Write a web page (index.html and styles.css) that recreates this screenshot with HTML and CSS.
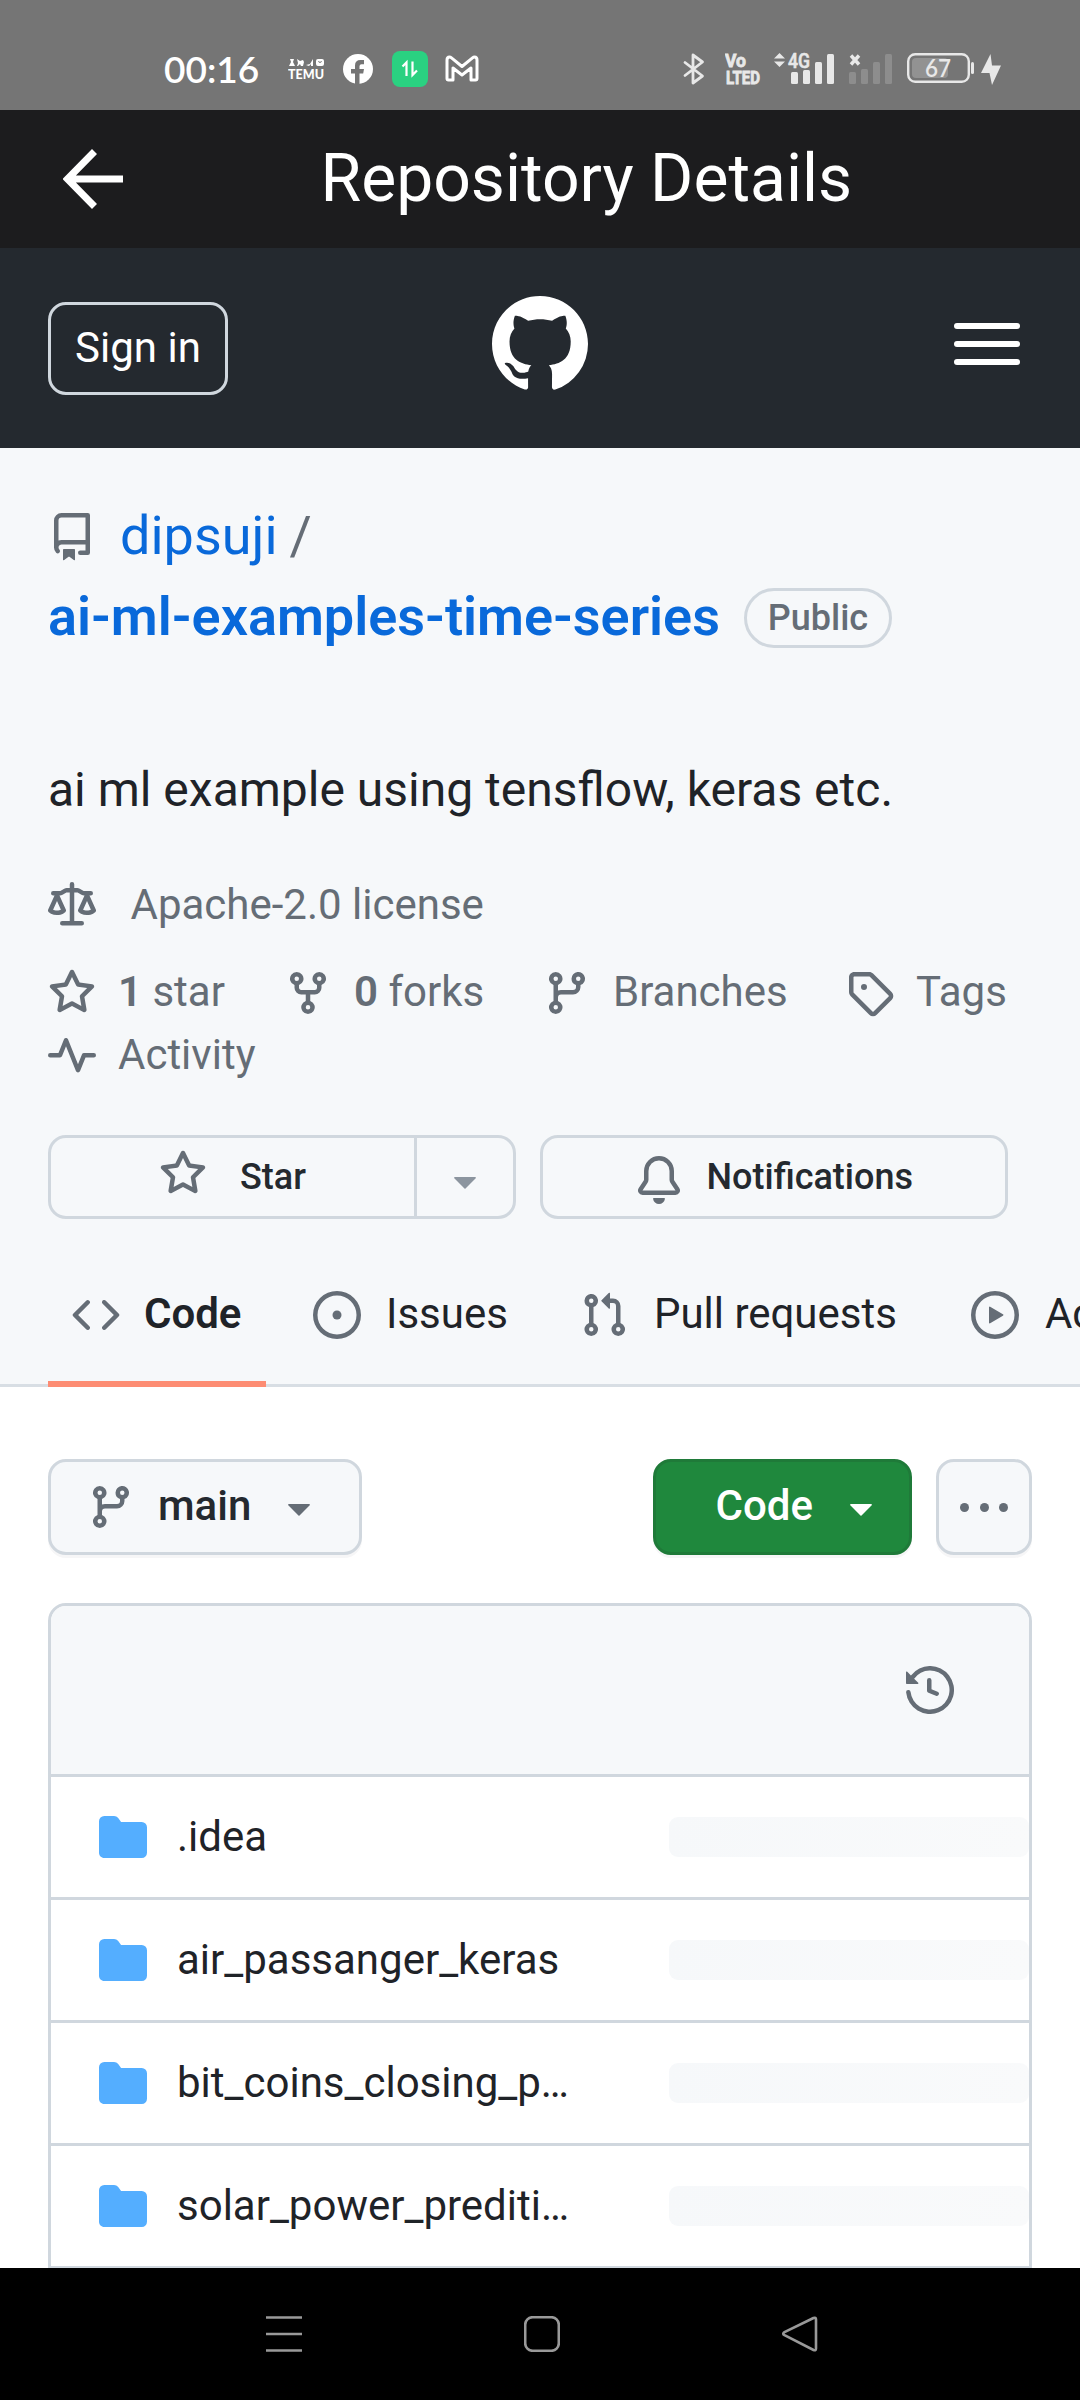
FILE: index.html
```html
<!DOCTYPE html>
<html lang="en">
<head>
<meta charset="utf-8">
<title>Repository Details</title>
<link rel="stylesheet" href="styles.css">
</head>
<body>
<svg class="sprite" aria-hidden="true">
  <symbol id="star" viewBox="0 0 16 16"><path d="M8 .25a.75.75 0 0 1 .673.418l1.882 3.815 4.21.612a.75.75 0 0 1 .416 1.279l-3.046 2.97.719 4.192a.751.751 0 0 1-1.088.791L8 12.347l-3.766 1.98a.75.75 0 0 1-1.088-.79l.72-4.194L.818 6.374a.75.75 0 0 1 .416-1.28l4.21-.611L7.327.668A.75.75 0 0 1 8 .25Zm0 2.445L6.615 5.5a.75.75 0 0 1-.564.41l-3.097.45 2.24 2.184a.75.75 0 0 1 .216.664l-.528 3.084 2.769-1.456a.75.75 0 0 1 .698 0l2.77 1.456-.53-3.084a.75.75 0 0 1 .216-.664l2.24-2.183-3.096-.45a.75.75 0 0 1-.564-.41L8 2.694Z"/></symbol>
  <symbol id="branch" viewBox="0 0 16 16"><path d="M9.5 3.25a2.25 2.25 0 1 1 3 2.122V6A2.5 2.5 0 0 1 10 8.5H6a1 1 0 0 0-1 1v1.128a2.251 2.251 0 1 1-1.5 0V5.372a2.25 2.25 0 1 1 1.5 0v1.836A2.493 2.493 0 0 1 6 7h4a1 1 0 0 0 1-1v-.628A2.25 2.25 0 0 1 9.5 3.25Zm-6 0a.75.75 0 1 0 1.5 0 .75.75 0 0 0-1.5 0Zm8.25-.75a.75.75 0 1 0 0 1.5.75.75 0 0 0 0-1.5ZM4.25 12a.75.75 0 1 0 0 1.5.75.75 0 0 0 0-1.5Z"/></symbol>
  <symbol id="caret" viewBox="0 0 16 16"><path d="m4.427 7.427 3.396 3.396a.25.25 0 0 0 .354 0l3.396-3.396A.25.25 0 0 0 11.396 7H4.604a.25.25 0 0 0-.177.427Z"/></symbol>
  <symbol id="folder" viewBox="0 0 16 16"><path d="M1.75 1A1.75 1.75 0 0 0 0 2.75v10.5C0 14.216.784 15 1.75 15h12.5A1.75 1.75 0 0 0 16 13.25v-8.5A1.75 1.75 0 0 0 14.25 3H7.5a.25.25 0 0 1-.2-.1l-.9-1.2C6.07 1.26 5.55 1 5 1H1.75Z"/></symbol>
</svg>

<div class="status">
  <span class="clock">00:16</span>
  <svg class="temu" viewBox="0 0 36 22" width="36" height="22">
    <path d="M1 8 3 4 2 1h4L5 4l2 4zM9 1l3 2 3-1 1 2-1 4h-2l-1-2-2 2H9l1-3zM18 7l4-1 3-5v7h-2V6l-2 2z"/>
    <path fill-rule="evenodd" d="M30 1h4q2 0 2 2v3q0 2-2 2h-4q-2 0-2-2V3q0-2 2-2zm0 2q2 4 4 0l-1 0q-1 2-2 0z"/>
    <text x="0" y="20.5" textLength="36" lengthAdjust="spacingAndGlyphs">TEMU</text>
  </svg>
  <svg class="fb" viewBox="0 0 30 30" width="30" height="30"><circle cx="15" cy="15" r="15"/><path class="cut" d="M12 30V19.500H8V15h4v-3.500Q12 6 17.500 6H21v4.200h-2.500q-2 0-2 2V15H21l-.8 4.500h-3.700V30z"/></svg>
  <svg class="sync" viewBox="0 0 36 36" width="36" height="36"><rect width="36" height="36" rx="8"/><path d="M10.500 15.500l4-4V25M20.500 10.500V24l4.500-4.500"/></svg>
  <svg class="mail" viewBox="0 0 34 27" width="34" height="27"><path d="M2 23.500V5q0-3 2.500-3 1 0 2 .8L17 11.500 27.500 2.800q1-.8 2-.8Q32 2 32 5v18.500q0 1.500-1.500 1.500H26V13l-9 7-9-7v12H3.500Q2 25 2 23.500z"/></svg>

  <svg class="bt" viewBox="0 0 22 34" width="22" height="34"><path d="M2 10.500 19.500 24 10 31V3l9.500 7L2 23.500"/></svg>
  <svg class="volte" viewBox="0 0 36 40" width="36" height="40"><text x="0" y="18" textLength="21" lengthAdjust="spacingAndGlyphs">Vo</text><text x="1" y="34.500" textLength="34" lengthAdjust="spacingAndGlyphs">LTED</text></svg>
  <svg class="net" viewBox="0 -6 60 40" width="60" height="40">
    <path d="M0 6.500 5.500 1 11 6.500zM0 9.500h11L5.500 15z"/>
    <text x="14" y="15.500" textLength="22" lengthAdjust="spacingAndGlyphs">4G</text>
    <rect x="17" y="20" width="7" height="12" rx="1.500"/><rect x="29" y="18" width="7" height="14" rx="1.500"/><rect x="41" y="10" width="7" height="22" rx="1.500"/><rect x="53" y="2" width="7" height="30" rx="1.500"/>
  </svg>
  <svg class="net2" viewBox="0 0 44 34" width="44" height="34">
    <path d="M2 3.500l8 9M10 3.500l-8 9"/>
    <g class="dim"><rect x="0" y="20" width="7" height="12" rx="1.500"/><rect x="12" y="17" width="7" height="15" rx="1.500"/><rect x="24" y="10" width="7" height="22" rx="1.500"/><rect x="36" y="2" width="7" height="30" rx="1.500"/></g>
  </svg>
  <svg class="battery" viewBox="0 0 68 32" width="68" height="32">
    <rect class="level" x="5" y="6" width="36" height="20" rx="4"/>
    <rect class="shell" x="1.200" y="2.200" width="60.600" height="27.600" rx="7"/>
    <rect class="nub" x="64" y="10" width="3" height="12" rx="1.500"/>
    <text x="18" y="25" textLength="26" lengthAdjust="spacingAndGlyphs">67</text>
  </svg>
  <svg class="bolt" viewBox="0 0 20 32" width="20" height="32"><path d="M9.500 0 0 19h8.500L11 31 20 11.500h-9z"/></svg>
</div>

<header class="appbar">
  <svg class="back" viewBox="0 0 60 60" width="60" height="60"><path d="M60 30H5M31.500 2.500 4.500 30 31.500 57.500"/></svg>
  <h1>Repository Details</h1>
</header>

<div class="ghbar">
  <a class="signin">Sign in</a>
  <svg class="mark" viewBox="0 0 16 16"><path d="M8 0C3.580 0 0 3.580 0 8c0 3.540 2.290 6.530 5.470 7.590.4.070.55-.17.55-.38 0-.19-.01-.82-.01-1.490-2.010.37-2.530-.49-2.690-.94-.09-.23-.48-.94-.82-1.130-.28-.15-.68-.52-.01-.53.63-.01 1.080.58 1.230.82.72 1.210 1.870.87 2.330.66.07-.52.28-.87.51-1.070-1.780-.2-3.640-.89-3.640-3.950 0-.87.31-1.590.82-2.150-.08-.2-.36-1.020.08-2.120 0 0 .67-.21 2.200.82.64-.18 1.320-.27 2-.27.68 0 1.360.09 2 .27 1.530-1.040 2.200-.82 2.200-.82.44 1.100.16 1.920.08 2.120.51.56.82 1.270.82 2.150 0 3.070-1.870 3.750-3.650 3.950.29.25.54.73.54 1.480 0 1.070-.01 1.930-.01 2.200 0 .21.15.46.55.38A8.013 8.013 0 0 0 16 8c0-4.420-3.580-8-8-8Z"/></svg>
  <div class="burger"><i></i><i></i><i></i></div>
</div>

<section class="repo">
  <div class="title">
    <svg class="oct" viewBox="0 0 16 16"><path d="M2 2.500A2.500 2.500 0 0 1 4.500 0h8.750a.75.75 0 0 1 .75.75v12.500a.75.75 0 0 1-.75.75h-2.500a.75.75 0 0 1 0-1.500h1.750v-2h-8a1 1 0 0 0-.714 1.700.75.75 0 1 1-1.072 1.050A2.495 2.495 0 0 1 2 11.500Zm10.500-1h-8a1 1 0 0 0-1 1v6.708A2.486 2.486 0 0 1 4.500 9h8ZM5 12.250a.25.25 0 0 1 .25-.25h3.500a.25.25 0 0 1 .25.25v3.250a.25.25 0 0 1-.4.2l-1.450-1.087a.249.249 0 0 0-.3 0L5.400 15.700a.25.25 0 0 1-.4-.2Z"/></svg>
    <a>dipsuji</a><span class="slash">/</span>
  </div>
  <div class="title"><a class="name">ai-ml-examples-time-series</a><span class="label">Public</span></div>
  <p class="about">ai ml example using tensflow, keras etc.</p>
  <div class="license">
    <svg class="oct" viewBox="0 0 16 16"><path d="M8.750.75V2h.985c.304 0 .603.08.867.231l1.290.736c.038.022.08.033.124.033h2.234a.75.75 0 0 1 0 1.500h-.427l2.111 4.692a.75.75 0 0 1-.154.838l-.53-.53.529.531-.001.002-.002.002-.006.006-.006.005-.01.01-.045.04c-.21.176-.441.327-.686.45C14.556 10.780 13.880 11 13 11a4.498 4.498 0 0 1-2.023-.454 3.544 3.544 0 0 1-.686-.45l-.045-.04-.016-.015-.006-.006-.004-.004v-.001a.75.75 0 0 1-.154-.838L12.178 4.500h-.162c-.305 0-.604-.079-.868-.231l-1.290-.736a.245.245 0 0 0-.124-.033H8.750V13h2.500a.75.75 0 0 1 0 1.500h-6.500a.75.75 0 0 1 0-1.500h2.500V3.500h-.984a.245.245 0 0 0-.124.033l-1.289.737c-.265.15-.564.23-.869.23h-.162l2.112 4.692a.75.75 0 0 1-.154.838l-.53-.53.529.531-.001.002-.002.002-.006.006-.016.015-.045.04c-.21.176-.441.327-.686.45C4.556 10.780 3.880 11 3 11a4.498 4.498 0 0 1-2.023-.454 3.544 3.544 0 0 1-.686-.45l-.045-.04-.016-.015-.006-.006-.004-.004v-.001a.75.75 0 0 1-.154-.838L2.178 4.500H1.750a.75.75 0 0 1 0-1.500h2.234a.249.249 0 0 0 .125-.033l1.288-.737c.265-.15.564-.23.869-.23h.984V.75a.75.75 0 0 1 1.500 0Zm2.945 8.477c.285.135.718.273 1.305.273s1.020-.138 1.305-.273L13 6.327Zm-10 0c.285.135.718.273 1.305.273s1.020-.138 1.305-.273L3 6.327Z"/></svg>
    Apache-2.0 license
  </div>
  <div class="stats">
    <a><svg class="oct"><use href="#star"/></svg><span><b>1</b> star</span></a>
    <a><svg class="oct" viewBox="0 0 16 16"><path d="M5 5.372v.878c0 .414.336.75.75.75h4.500a.75.75 0 0 0 .75-.75v-.878a2.250 2.250 0 1 1 1.500 0v.878a2.250 2.250 0 0 1-2.250 2.250h-1.500v2.128a2.251 2.251 0 1 1-1.500 0V8.500h-1.500A2.250 2.250 0 0 1 3.500 6.250v-.878a2.250 2.250 0 1 1 1.500 0ZM5 3.250a.75.75 0 1 0-1.500 0 .75.75 0 0 0 1.500 0Zm6.750.75a.75.75 0 1 0 0-1.500.75.75 0 0 0 0 1.500Zm-3 8.750a.75.75 0 1 0-1.500 0 .75.75 0 0 0 1.500 0Z"/></svg><span><b>0</b> forks</span></a>
    <a><svg class="oct"><use href="#branch"/></svg><span>Branches</span></a>
    <a><svg class="oct" viewBox="0 0 16 16"><path d="M1 7.775V2.750C1 1.784 1.784 1 2.750 1h5.025c.464 0 .91.184 1.238.513l6.250 6.250a1.750 1.750 0 0 1 0 2.474l-5.026 5.026a1.750 1.750 0 0 1-2.474 0l-6.250-6.250A1.752 1.752 0 0 1 1 7.775Zm1.500 0c0 .066.026.13.073.177l6.250 6.250a.25.25 0 0 0 .354 0l5.025-5.025a.25.25 0 0 0 0-.354l-6.250-6.250a.25.25 0 0 0-.177-.073H2.750a.25.25 0 0 0-.25.25ZM6 5a1 1 0 1 1 0 2 1 1 0 0 1 0-2Z"/></svg><span>Tags</span></a>
    <a><svg class="oct" viewBox="0 0 16 16"><path d="M6 2c.306 0 .582.187.696.471L10 10.731l1.304-3.260A.751.751 0 0 1 12 7h3.250a.75.75 0 0 1 0 1.500h-2.742l-1.812 4.528a.751.751 0 0 1-1.392 0L6 4.770 4.696 8.030A.75.75 0 0 1 4 8.500H.75a.75.75 0 0 1 0-1.500h2.742l1.812-4.529A.751.751 0 0 1 6 2Z"/></svg><span>Activity</span></a>
  </div>
  <div class="actions">
    <div class="btn split">
      <span class="main"><svg class="oct raise"><use href="#star"/></svg>Star</span>
      <span class="drop"><svg class="oct"><use href="#caret"/></svg></span>
    </div>
    <div class="btn notify"><svg class="oct lower" viewBox="0 0 16 16"><path d="M8 16a2 2 0 0 0 1.985-1.750c.017-.137-.097-.25-.235-.25h-3.500c-.138 0-.252.113-.235.25A2 2 0 0 0 8 16ZM3 5a5 5 0 0 1 10 0v2.947c0 .05.015.098.042.139l1.703 2.555A1.519 1.519 0 0 1 13.482 13H2.518a1.516 1.516 0 0 1-1.263-2.360l1.703-2.554A.255.255 0 0 0 3 7.947Zm5-3.500A3.500 3.500 0 0 0 4.500 5v2.947c0 .346-.102.683-.294.97l-1.703 2.556a.017.017 0 0 0-.003.01l.001.006c0 .002.002.004.004.006l.006.004.007.001h10.964l.007-.001.006-.004.004-.006.001-.007a.017.017 0 0 0-.003-.01l-1.703-2.554a1.745 1.745 0 0 1-.294-.97V5A3.500 3.500 0 0 0 8 1.500Z"/></svg>Notifications</div>
  </div>
  <nav class="tabs">
    <a class="on"><svg class="oct" viewBox="0 0 16 16"><path d="m11.280 3.220 4.250 4.250a.75.75 0 0 1 0 1.060l-4.250 4.250a.749.749 0 0 1-1.275-.326.749.749 0 0 1 .215-.734L13.940 8l-3.720-3.720a.749.749 0 0 1 .326-1.275.749.749 0 0 1 .734.215Zm-6.560 0a.751.751 0 0 1 1.042.018.751.751 0 0 1 .018 1.042L2.060 8l3.720 3.720a.749.749 0 0 1-.326 1.275.749.749 0 0 1-.734-.215L.47 8.530a.75.75 0 0 1 0-1.060Z"/></svg><span>Code</span></a>
    <a><svg class="oct" viewBox="0 0 16 16"><path d="M8 9.500a1.500 1.500 0 1 0 0-3 1.500 1.500 0 0 0 0 3Z"/><path d="M8 0a8 8 0 1 1 0 16A8 8 0 0 1 8 0ZM1.500 8a6.500 6.500 0 1 0 13 0 6.500 6.500 0 0 0-13 0Z"/></svg><span>Issues</span></a>
    <a><svg class="oct" viewBox="0 0 16 16"><path d="M1.500 3.250a2.250 2.250 0 1 1 3 2.122v5.256a2.251 2.251 0 1 1-1.500 0V5.372A2.250 2.250 0 0 1 1.500 3.250Zm5.677-.177L9.573.677A.25.25 0 0 1 10 .854V2.500h1A2.500 2.500 0 0 1 13.500 5v5.628a2.251 2.251 0 1 1-1.500 0V5a1 1 0 0 0-1-1h-1v1.646a.25.25 0 0 1-.427.177L7.177 3.427a.25.25 0 0 1 0-.354ZM3.750 2.500a.75.75 0 1 0 0 1.500.75.75 0 0 0 0-1.500Zm0 9.500a.75.75 0 1 0 0 1.500.75.75 0 0 0 0-1.500Zm8.250.75a.75.75 0 1 0 1.500 0 .75.75 0 0 0-1.500 0Z"/></svg><span>Pull requests</span></a>
    <a><svg class="oct" viewBox="0 0 16 16"><path d="M8 0a8 8 0 1 1 0 16A8 8 0 0 1 8 0ZM1.500 8a6.500 6.500 0 1 0 13 0 6.500 6.500 0 0 0-13 0Zm4.879-2.773 4.264 2.559a.25.25 0 0 1 0 .428l-4.264 2.559A.25.25 0 0 1 6 10.559V5.442a.25.25 0 0 1 .379-.215Z"/></svg><span>Actions</span></a>
  </nav>
</section>

<main class="content">
  <div class="toolbar">
    <div class="tool ref"><svg class="oct"><use href="#branch"/></svg><span>main</span><svg class="oct"><use href="#caret"/></svg></div>
    <div class="tool green"><span>Code</span><svg class="oct"><use href="#caret"/></svg></div>
    <div class="tool more"><i></i><i></i><i></i></div>
  </div>
  <div class="files">
    <div class="head"><svg class="oct" viewBox="0 0 16 16"><path d="m.427 1.927 1.215 1.215a8.002 8.002 0 1 1-1.600 5.685.75.75 0 1 1 1.493-.154 6.500 6.500 0 1 0 1.180-4.458l1.358 1.358A.25.25 0 0 1 3.896 6H.25A.25.25 0 0 1 0 5.750V2.104a.25.25 0 0 1 .427-.177ZM7.750 4a.75.75 0 0 1 .75.75v2.992l2.028.812a.75.75 0 0 1-.557 1.392l-2.500-1A.751.751 0 0 1 7 8.250v-3.500A.75.75 0 0 1 7.750 4Z"/></svg></div>
    <div class="row"><svg class="oct"><use href="#folder"/></svg><span>.idea</span><i></i></div>
    <div class="row"><svg class="oct"><use href="#folder"/></svg><span>air_passanger_keras</span><i></i></div>
    <div class="row"><svg class="oct"><use href="#folder"/></svg><span>bit_coins_closing_p…</span><i></i></div>
    <div class="row"><svg class="oct"><use href="#folder"/></svg><span>solar_power_prediti…</span><i></i></div>
  </div>
</main>

<footer class="sysnav">
  <svg viewBox="0 0 36 36" width="36" height="36"><path d="M0 1.500h36M0 18h36M0 34.500h36"/></svg>
  <svg viewBox="0 0 36 36" width="36" height="36"><rect x="1.200" y="1.200" width="33.600" height="33.600" rx="7.500"/></svg>
  <svg viewBox="0 0 36 36" width="36" height="36"><path d="M31.500 2 2.500 16.200q-2.500 1.500 0 3L31.500 34q2.500 1 2.500-1.500v-29Q34 1 31.500 2z"/></svg>
</footer>
</body>
</html>
```
FILE: styles.css
```css
* { box-sizing: border-box; }

body {
  margin: 0;
  width: 1080px;
  height: 2400px;
  overflow: hidden;
  display: flex;
  flex-direction: column;
  background: #fff;
  color: #1f2328;
  font-family: Roboto, "Liberation Sans", sans-serif;
  font-size: 42px;
  line-height: 63px;
}

h1, p { margin: 0; font-weight: 400; }
svg { display: block; flex: none; }
.sprite { position: absolute; width: 0; height: 0; }
.oct { width: 48px; height: 48px; fill: #656d76; }

/* system status bar */
.status {
  height: 110px;
  flex: none;
  display: flex;
  align-items: flex-start;
  background: #757575;
  fill: #e8e8e8;
}
.clock {
  width: 124px;
  margin: 37px 0 0 164px;
  font: 600 37px/64px Lato, sans-serif;
  color: #fff;
  white-space: nowrap;
}
.temu { margin-top: 58px; fill: #fff; }
.temu text { font: 900 13px Lato, sans-serif; }
.fb { margin: 54px 0 0 19px; fill: #fff; }
.fb .cut { fill: #757575; }
.sync { margin: 51px 0 0 19px; fill: #2ad181; }
.sync path { fill: none; stroke: #fff; stroke-width: 2.2; }
.mail { margin: 55px 0 0 17px; fill: none; stroke: #fff; stroke-width: 3; stroke-linejoin: round; }
.bt { margin: 52px 0 0 204px; fill: none; stroke: #e8e8e8; stroke-width: 2.8; stroke-linejoin: round; stroke-linecap: round; }
.volte { margin: 49px 0 0 20px; }
.volte text { font: 700 18px Roboto, sans-serif; stroke: #e8e8e8; stroke-width: .8; }
.net { margin: 46px 0 0 13px; }
.net text { font: 500 20px Roboto, sans-serif; stroke: #e8e8e8; stroke-width: .6; }
.net2 { margin: 52px 0 0 15px; }
.net2 path { stroke: #e8e8e8; stroke-width: 3.4; }
.dim { fill: #8d8d8d; }
.battery { margin: 52px 0 0 14px; }
.battery .level { fill: #929292; }
.battery .shell { fill: none; stroke: #e8e8e8; stroke-width: 2.4; }
.battery text { font: 600 24px Lato, sans-serif; }
.bolt { margin: 54px 0 0 6px; }

/* app bar */
.appbar {
  height: 138px;
  flex: none;
  display: flex;
  align-items: center;
  padding-left: 63px;
  background: #1c1c1e;
  color: #fff;
}
.back { fill: none; stroke: #fff; stroke-width: 7; }
.appbar h1 { margin-left: 197.5px; font-size: 66px; line-height: 80px; white-space: nowrap; }

/* site header */
.ghbar {
  height: 200px;
  flex: none;
  display: flex;
  align-items: flex-start;
  padding-left: 48px;
  background: #24292f;
  color: #fff;
}
.signin {
  width: 180px;
  height: 93px;
  margin-top: 54px;
  border: 3px solid #d0d7de;
  border-radius: 18px;
  line-height: 86px;
  text-align: center;
}
.mark { width: 96px; height: 96px; margin: 48px 0 0 264px; fill: #fff; }
.burger { width: 66px; margin: 75px 0 0 366px; display: grid; gap: 12px; }
.burger i { height: 6px; border-radius: 3px; background: #fff; }

/* repository header */
.repo {
  height: 939px;
  flex: none;
  padding: 47px 0 0 48px;
  background: #f6f8fa;
  border-bottom: 3px solid #d8dee4;
  color: #656d76;
}
.title { display: flex; align-items: center; height: 81px; font-size: 54px; line-height: 81px; white-space: nowrap; }
.title a { color: #0969da; }
.title .oct { margin: 3px 24px 0 0; }
.slash { margin-left: 12px; }
.title .name { font-weight: 600; }
.label {
  width: 148px;
  height: 60px;
  margin: 3px 0 0 24px;
  border: 3px solid #d0d7de;
  border-radius: 30px;
  font-size: 36px;
  font-weight: 500;
  line-height: 54px;
  text-align: center;
}
.about { margin-top: 97px; font-size: 48px; line-height: 72px; color: #1f2328; white-space: nowrap; }
.license { margin-top: 47px; display: flex; align-items: center; gap: 34.5px; }
.license .oct, .stats .oct { margin-top: 3px; }
.stats {
  margin-top: 24px;
  display: grid;
  grid-template-columns: 236px 259px 303px 180px;
  grid-auto-rows: 63px;
}
.stats a { display: flex; align-items: center; gap: 22px; white-space: nowrap; }
.stats b { font-weight: 600; }

.actions { margin-top: 49px; display: flex; gap: 24px; }
.btn {
  width: 468px;
  height: 84px;
  display: flex;
  border: 3px solid #d0d7de;
  border-radius: 18px;
  font-size: 36px;
  font-weight: 500;
  line-height: 78px;
  color: #24292f;
}
.main { width: 363px; display: flex; align-items: center; gap: 33px; padding-left: 108px; }
.raise { margin-bottom: 6px; }
.drop { flex: 1; display: flex; align-items: center; padding-left: 24px; border-left: 3px solid #d0d7de; }
.drop .oct { margin-top: 6px; fill: #8c959f; }
.notify { align-items: center; padding-left: 92px; gap: 23.5px; }
.lower { margin-top: 6px; }

.tabs { margin: 24px 0 0 0; height: 144px; display: flex; align-items: flex-start; overflow: hidden; color: #1f2328; }
.tabs a { display: flex; align-items: center; height: 144px; gap: 25px; flex: none; white-space: nowrap; padding: 0 24px; margin-right: 24px; }
.tabs a + a + a { gap: 26px; margin-right: 26px; }
.tabs span { margin-bottom: 3px; }
.tabs .on {
  width: 218px;
  gap: 24px;
  margin-right: 23px;
  background: linear-gradient(#fd8c73, #fd8c73) bottom / 100% 6px no-repeat;
}
.tabs .on span { font-weight: 600; }

/* repository content */
.content { flex: 1; min-height: 0; overflow: hidden; padding: 72px 48px 0; }
.toolbar { display: flex; gap: 24px; font-weight: 500; }
.tool {
  height: 96px;
  display: flex;
  align-items: center;
  border: 3px solid #d0d7de;
  border-radius: 18px;
  background: #f6f8fa;
  box-shadow: 0 3px 0 rgba(31, 35, 40, .04);
  color: #24292f;
}
.tool span { margin-bottom: 3px; }
.ref { width: 314px; padding-left: 36px; margin-right: auto; }
.ref span { width: 117px; margin-left: 23px; }
.green { width: 259px; padding-left: 59.5px; background: #1f883d; border-color: #1f7a39; color: #fff; }
.green span { width: 121.5px; }
.green .oct { fill: #fff; }
.more { width: 96px; justify-content: center; gap: 10.5px; }
.more i { width: 9px; height: 9px; border-radius: 50%; background: #656d76; }

.files { border: 3px solid #d0d7de; border-radius: 18px 18px 0 0; margin-top: 48px; overflow: hidden; }
.head { height: 168px; display: flex; align-items: center; justify-content: flex-end; padding-right: 75px; background: #f6f8fa; }
.row { height: 123px; display: flex; align-items: center; border-top: 3px solid #d0d7de; padding-left: 48px; }
.row .oct { fill: #54aeff; }
.row span { width: 492px; margin: 0 0 2px 30px; white-space: nowrap; }
.row i { width: 360px; height: 40px; border-radius: 9px; background: linear-gradient(100deg, #f6f8fa, #f9fafb); }

/* system navigation */
.sysnav { height: 132px; flex: none; display: flex; gap: 222px; padding: 48px 0 0 266px; background: #000; fill: none; stroke: #999; stroke-width: 2.6; }
```
